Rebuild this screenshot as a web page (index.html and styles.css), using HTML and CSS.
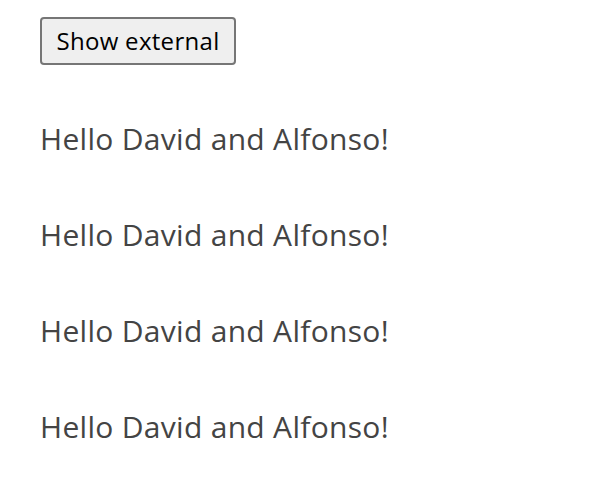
FILE: index.html
```html
<!DOCTYPE html>
<html>
<head>
<meta charset="utf-8">
<link rel="stylesheet" href="styles.css">
</head>
<body>
<div class="page">
  <button class="btn">Show external</button>
  <div class="list">
    <p class="greet">Hello David and Alfonso!</p>
    <p class="greet">Hello David and Alfonso!</p>
    <p class="greet">Hello David and Alfonso!</p>
    <p class="greet">Hello David and Alfonso!</p>
  </div>
</div>
</body>
</html>
```
FILE: styles.css
```css
html, body {
  margin: 0;
  padding: 0;
  background: #ffffff;
}
.page {
  padding: 17px 40px;
  display: flex;
  flex-direction: column;
  align-items: flex-start;
  font-family: "Open Sans", "Noto Sans", sans-serif;
}
.btn {
  font-family: "Open Sans", "Noto Sans", sans-serif;
  font-size: 24px;
  letter-spacing: 0.3px;
  color: #000;
  background: #efefef;
  border: 2px solid #767676;
  border-radius: 4px;
  width: 196px;
  height: 48px;
  padding: 0 0 2px 0;
}
.list {
  display: flex;
  flex-direction: column;
  gap: 56px;
  margin-top: 54px;
}
.greet {
  margin: 0;
  font-size: 30px;
  letter-spacing: 0.3px;
  line-height: 40px;
  color: #444;
}
```
